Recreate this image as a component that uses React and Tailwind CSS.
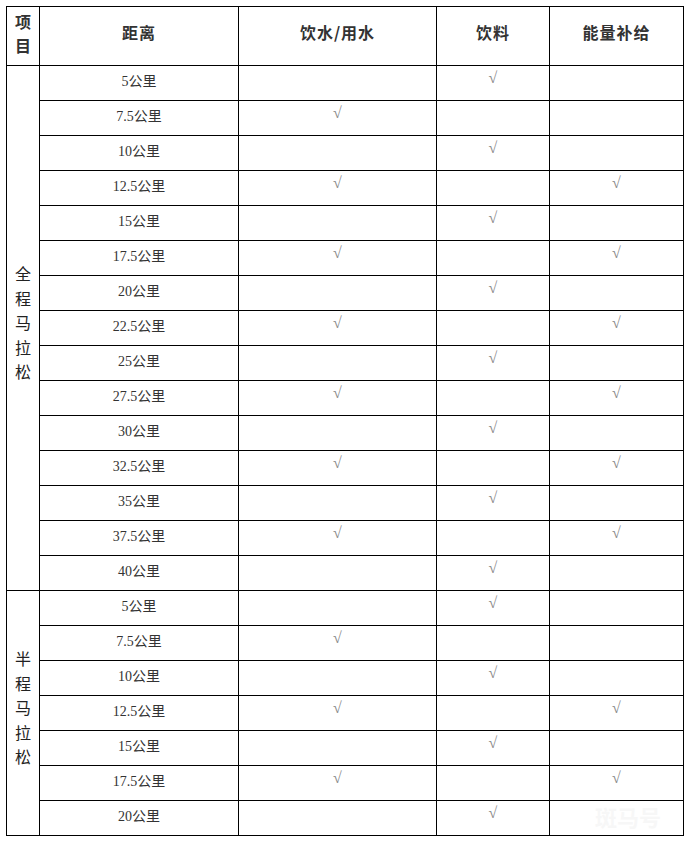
const full = [
  ['5公里', '', '√', ''],
  ['7.5公里', '√', '', ''],
  ['10公里', '', '√', ''],
  ['12.5公里', '√', '', '√'],
  ['15公里', '', '√', ''],
  ['17.5公里', '√', '', '√'],
  ['20公里', '', '√', ''],
  ['22.5公里', '√', '', '√'],
  ['25公里', '', '√', ''],
  ['27.5公里', '√', '', '√'],
  ['30公里', '', '√', ''],
  ['32.5公里', '√', '', '√'],
  ['35公里', '', '√', ''],
  ['37.5公里', '√', '', '√'],
  ['40公里', '', '√', ''],
];

const half = full.slice(0, 7);

const cell = 'border border-black text-center align-middle p-0';
const check = 'text-[#888] text-[16px] leading-[20px] pb-[10px]';

function Group({ label, rows }) {
  return rows.map((r, i) => (
    <tr key={label + i} className="h-[35px]">
      {i === 0 && (
        <td rowSpan={rows.length} className={cell + ' pb-[7px]'}>
          <div className="flex flex-col items-center text-[16px] leading-[24.5px] text-[#222]">
            {label.split('').map((c, j) => (
              <span key={j}>{c}</span>
            ))}
          </div>
        </td>
      )}
      <td className={cell + ' text-[14px] leading-[20px] text-[#333] pb-[3px]'}>{r[0]}</td>
      <td className={cell + ' ' + check}>{r[1]}</td>
      <td className={cell + ' ' + check}>{r[2]}</td>
      <td className={cell + ' ' + check}>{r[3]}</td>
    </tr>
  ));
}

export default function App() {
  return (
    <div
      className="bg-white min-h-screen pl-[6px] pt-[6px] relative"
      style={{ fontFamily: '"Liberation Serif", "Noto Sans CJK SC", serif' }}
    >
      <table className="border-collapse table-fixed w-[677px]">
        <colgroup>
          <col className="w-[33px]" />
          <col className="w-[199px]" />
          <col className="w-[198px]" />
          <col className="w-[113px]" />
          <col className="w-[134px]" />
        </colgroup>
        <thead>
          <tr className="h-[59px]">
            <th className={cell + ' font-bold text-[16px] text-[#333] pb-[6px]'}>
              <div className="flex flex-col items-center leading-[24px]" style={{ fontFamily: '"Noto Sans CJK SC", sans-serif' }}>
                <span>项</span>
                <span>目</span>
              </div>
            </th>
            {['距离', '饮水/用水', '饮料', '能量补给'].map((h) => (
              <th
                key={h}
                className={cell + ' font-bold text-[16px] text-[#333] tracking-[1px] pb-[8px]'}
                style={{ fontFamily: '"Noto Sans CJK SC", sans-serif' }}
              >
                {h}
              </th>
            ))}
          </tr>
        </thead>
        <tbody>
          <Group label="全程马拉松" rows={full} />
          <Group label="半程马拉松" rows={half} />
        </tbody>
      </table>
      <div className="absolute left-[595px] top-[800px] text-[22px] font-bold text-[#f7f7f7] select-none" style={{ fontFamily: '"Noto Sans CJK SC", sans-serif' }}>
        斑马号
      </div>
    </div>
  );
}
